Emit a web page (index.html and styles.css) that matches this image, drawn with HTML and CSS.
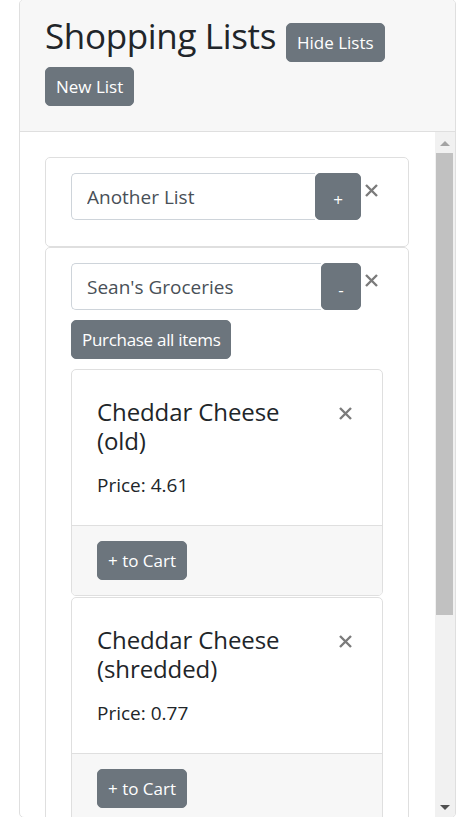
FILE: index.html
```html
<!DOCTYPE html>
<html lang="en">
<head>
<meta charset="utf-8">
<title>Shopping Lists</title>
<link rel="stylesheet" href="styles.css">
</head>
<body>
<div class="lists-card">
  <div class="lists-header">
    <div class="title-row">
      <h3 class="title">Shopping Lists</h3>
      <button class="btn">Hide Lists</button>
    </div>
    <button class="btn new-list">New List</button>
  </div>
  <div class="lists-main">
    <div class="lists-body">
      <div class="list-card">
        <div class="list-row">
          <div class="input-group">
            <input class="name-input" type="text" value="Another List">
            <button class="btn btn-toggle">+</button>
          </div>
          <button class="close" aria-label="Delete list"><svg viewBox="0 0 13 13" width="13" height="13"><path d="M1 1L12 12M12 1L1 12"/></svg></button>
        </div>
      </div>
      <div class="list-card">
        <div class="list-row">
          <div class="input-group">
            <input class="name-input" type="text" value="Sean's Groceries">
            <button class="btn btn-toggle btn-minus">-</button>
          </div>
          <button class="close" aria-label="Delete list"><svg viewBox="0 0 13 13" width="13" height="13"><path d="M1 1L12 12M12 1L1 12"/></svg></button>
        </div>
        <button class="btn purchase">Purchase all items</button>
        <div class="item-card">
          <div class="item-body">
            <div class="item-head">
              <h5 class="item-title">Cheddar Cheese (old)</h5>
              <button class="close item-close" aria-label="Remove item"><svg viewBox="0 0 13 13" width="13" height="13"><path d="M1 1L12 12M12 1L1 12"/></svg></button>
            </div>
            <p class="price">Price: 4.61</p>
          </div>
          <div class="item-footer"><button class="btn">+ to Cart</button></div>
        </div>
        <div class="item-card">
          <div class="item-body">
            <div class="item-head">
              <h5 class="item-title">Cheddar Cheese (shredded)</h5>
              <button class="close item-close" aria-label="Remove item"><svg viewBox="0 0 13 13" width="13" height="13"><path d="M1 1L12 12M12 1L1 12"/></svg></button>
            </div>
            <p class="price">Price: 0.77</p>
          </div>
          <div class="item-footer"><button class="btn">+ to Cart</button></div>
        </div>
      </div>
    </div>
    <div class="scrollbar" aria-hidden="true">
      <div class="sb-btn sb-up"><span class="arrow-up"></span></div>
      <div class="sb-track"><div class="sb-thumb"></div></div>
      <div class="sb-btn sb-down"><span class="arrow-down"></span></div>
    </div>
  </div>
</div>
</body>
</html>
```

FILE: styles.css
```css
* { box-sizing: border-box; }
html, body { margin: 0; padding: 0; background: #fff; overflow: hidden; }
body {
  font-family: "Open Sans", "Noto Sans", sans-serif;
  color: #212529;
  font-size: 20px;
}

.lists-card {
  margin: -1px 0 0 19px;
  width: 437px;
  height: 819px;
  border: 1px solid #dfdfdf;
  border-radius: 5px;
  display: flex;
  flex-direction: column;
  overflow: hidden;
}

.lists-header {
  flex: none;
  height: 132px;
  background: #f7f7f7;
  border-bottom: 1px solid #dfdfdf;
  padding: 16px 25px 0 25px;
}

.title-row {
  display: flex;
  align-items: baseline;
  gap: 10px;
}

.title {
  margin: 0;
  font-size: 35px;
  line-height: 40px;
  font-weight: 400;
  letter-spacing: -0.35px;
}

.btn {
  display: inline-flex;
  align-items: center;
  justify-content: center;
  height: 39px;
  padding: 0 10px;
  border: 1px solid #6c757d;
  border-radius: 5px;
  background: #6c757d;
  color: #fff;
  font-family: inherit;
  font-size: 17px;
  line-height: 27px;
  cursor: pointer;
}

.new-list { margin-top: 5px; }

.lists-main {
  flex: 1;
  min-height: 0;
  display: flex;
}

.lists-body {
  flex: 1;
  min-width: 0;
  overflow: hidden;
  padding: 25px 26px 25px 25px;
}

.scrollbar {
  flex: none;
  width: 20px;
  height: 686px;
  background: #f1f1f1;
  display: flex;
  flex-direction: column;
}
.sb-btn {
  flex: none;
  height: 20px;
  display: flex;
  justify-content: center;
}
.sb-up { align-items: flex-start; padding-top: 9px; }
.sb-down { align-items: flex-start; padding-top: 7px; }
.arrow-up {
  width: 0; height: 0;
  border-left: 5px solid transparent;
  border-right: 5px solid transparent;
  border-bottom: 5px solid #a3a3a3;
}
.arrow-down {
  width: 0; height: 0;
  border-left: 5px solid transparent;
  border-right: 5px solid transparent;
  border-top: 5px solid #505050;
}
.sb-track { flex: 1; padding: 1px 2px 0 1px; }
.sb-thumb { height: 462px; background: #c1c1c1; }

.list-card {
  border: 1px solid #dfdfdf;
  border-radius: 5px;
  padding: 15px 25px 26px 25px;
}

.list-row {
  display: flex;
  align-items: flex-start;
}

.input-group {
  display: flex;
  width: 290px;
  flex: none;
}

.name-input {
  flex: 1;
  min-width: 0;
  height: 47px;
  border: 1px solid #ced4da;
  border-right: none;
  border-radius: 5px 0 0 5px;
  padding: 0 15px;
  font-family: inherit;
  font-size: 19px;
  color: #495057;
  background: #fff;
}

.btn-toggle {
  width: 46px;
  height: 47px;
  padding: 0;
  font-size: 17px;
  padding-top: 6px;
}
.btn-minus { width: 40px; }

.close {
  border: none;
  background: transparent;
  padding: 0;
  margin: 11px 0 0 4px;
  width: 14px;
  height: 14px;
  display: flex;
  cursor: pointer;
}
.close svg { display: block; }
.close path {
  stroke: #7b7b7b;
  stroke-width: 2.4;
  fill: none;
}

.purchase { margin-top: 10px; letter-spacing: -0.3px; }

.item-card {
  margin-top: 1px;
  border: 1px solid #dfdfdf;
  border-radius: 5px;
  overflow: hidden;
}
.purchase + .item-card { margin-top: 10px; }

.item-body {
  padding: 25px;
}

.item-head {
  display: flex;
  align-items: flex-start;
}

.item-title {
  margin: 2px 0 0 0;
  max-width: 215px;
  font-size: 24px;
  line-height: 29px;
  font-weight: 400;
  letter-spacing: -0.1px;
}

.item-close {
  margin: 12px 4px 0 auto;
}

.price {
  margin: 15px 0 0 0;
  font-size: 19px;
  line-height: 30px;
}

.item-footer {
  background: #f7f7f7;
  border-top: 1px solid #dfdfdf;
  padding: 15px 25px;
}
```
